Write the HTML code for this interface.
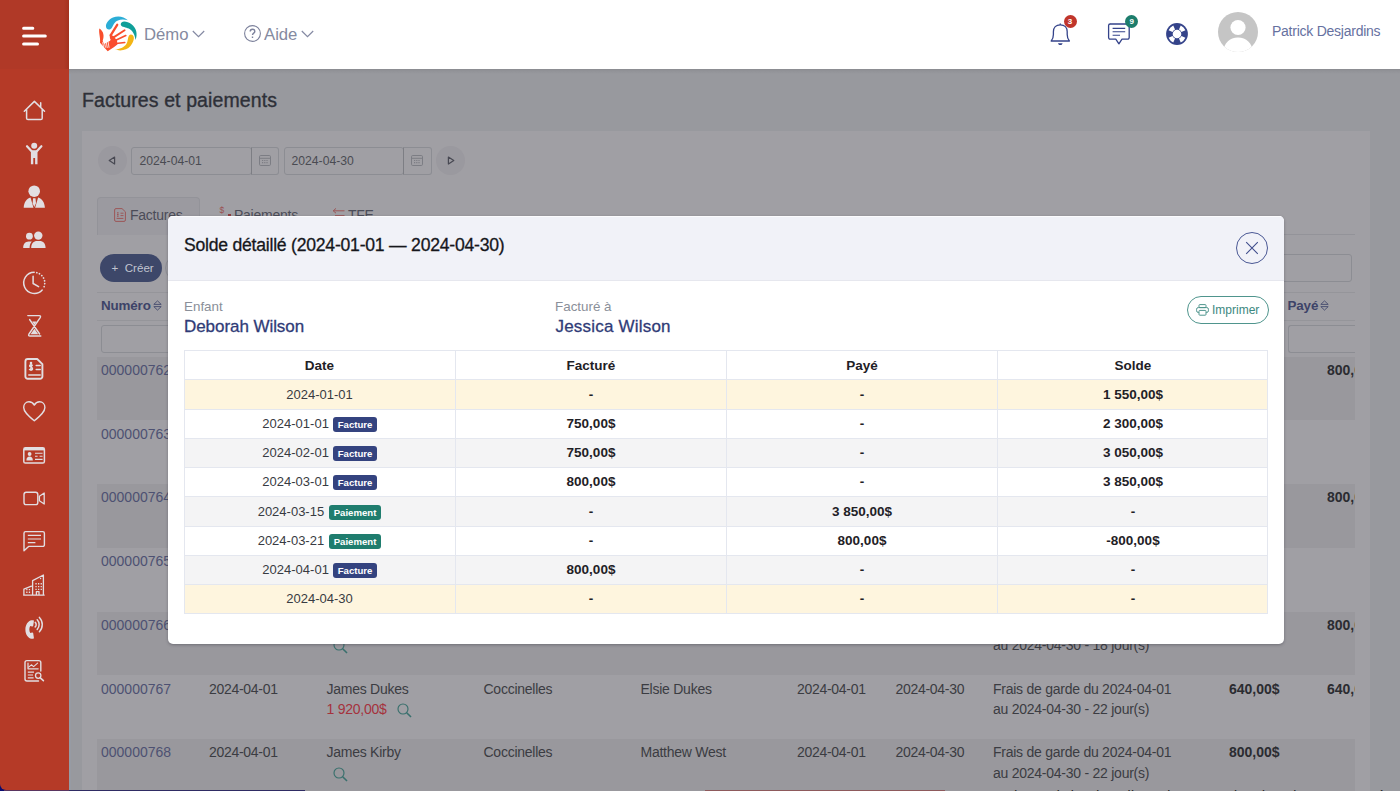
<!DOCTYPE html>
<html lang="fr"><head><meta charset="utf-8"><title>Factures et paiements</title>
<style>

*{box-sizing:border-box;margin:0;padding:0}
html,body{width:1400px;height:791px;overflow:hidden}
body{font-family:"Liberation Sans",sans-serif;background:#98999e;position:relative;color:#3a3b40}
.abs{position:absolute}
svg{display:block;position:absolute;overflow:visible}
/* sidebar */
#side{left:0;top:0;width:69px;height:791px;background:#b53a27}
#sidetop{left:0;top:0;width:69px;height:69px;background:linear-gradient(90deg,#b03927 0,#b03927 64px,#a4321f 69px)}
/* header */
#head{left:69px;top:0;width:1331px;height:69px;background:#fff}
#headline{left:69px;top:69px;width:1331px;height:5px;background:linear-gradient(#8a8b90,#919297 35%,#98999e)}
.htxt{font-size:16.700px;color:#858aa0;white-space:nowrap;line-height:20px}
#user{left:1272px;top:21px;font-size:14px;letter-spacing:-.25px;color:#66719f;white-space:nowrap;line-height:20px}
.badge{border-radius:50%;width:13px;height:13px;color:#fff;font-size:8px;font-weight:bold;text-align:center;line-height:13px}
/* dimmed page */
#ptitle{left:82px;top:88px;letter-spacing:.1px;font-size:19.5px;color:#2e3038;white-space:nowrap;line-height:24px;-webkit-text-stroke:.35px #2e3038}
#card{left:82px;top:131px;width:1288px;height:670px;background:#a09fa4}
.inp{border:1px solid #8c8d93;border-radius:3px;height:28px}
.dtxt{font-size:12.2px;color:#4a4b52;white-space:nowrap;line-height:16px}
.rowd{left:97px;width:1258px;background:#99989d}
.bt{font-size:14px;color:#3b3c42;white-space:nowrap;line-height:18px;letter-spacing:-.25px}
.lnk{color:#4d5172;letter-spacing:0}
.bb{font-weight:bold;color:#2b2c31;letter-spacing:0}
.hl{left:97px;width:1258px;height:1px;background:#95959a}
.th{font-size:13.400px;letter-spacing:-.15px;font-weight:bold;color:#3d4368;white-space:nowrap;line-height:18px}
.tabt{font-size:14px;color:#4b4c58;white-space:nowrap;line-height:18px;letter-spacing:-.25px}
.dt{letter-spacing:-.3px}
/* modal */
#modal{left:168px;top:216px;width:1116px;height:428px;background:#fff;border-radius:5px;overflow:hidden;box-shadow:0 1px 3px rgba(60,60,70,.45)}
#mhead{left:0;top:0;width:1116px;height:64px;background:#f1f2f8;border-top:1px solid #fbfbfd}
#mline{left:0;top:64px;width:1116px;height:1px;background:#e6e7ee}
#mtitle{left:16px;top:16.5px;font-size:17.6px;letter-spacing:-.230px;color:#16171c;white-space:nowrap;line-height:24px;-webkit-text-stroke:.3px #16171c}
.lab{font-size:13.400px;color:#8a8f99;white-space:nowrap;line-height:16px;margin-top:.600px}
.nam{margin-top:.800px;letter-spacing:-.060px;font-size:17px;color:#303c78;white-space:nowrap;line-height:22px;-webkit-text-stroke:.3px #2e3a75}
#print{left:1019px;top:80px;width:82px;height:28px;border:1px solid #4f958d;border-radius:14px}
#print span{position:absolute;left:24px;top:6px;font-size:12px;color:#3c8880;line-height:14px;white-space:nowrap}
#tbl{left:16px;top:134.250px;width:1084px;height:263.550px;border:1px solid #e4e7ef}
.tr{position:absolute;left:0;width:1082px;height:29.200px;border-top:1px solid #e4e7ef}
.tr.y{background:#fef5de}.tr.g{background:#f4f4f5}
.td{position:absolute;top:0;height:28.200px;width:271px;text-align:center;font-size:13px;line-height:29.300px;color:#383b42;white-space:nowrap;border-left:1px solid #e4e7ef}
.td.b{font-weight:bold;color:#1f2126;font-size:13.5px}
.c0{left:-1px;border-left:none}.c1{left:270px}.c2{left:541px}.c3{left:812px}
.tag{display:inline-block;vertical-align:middle;position:relative;top:-.100px;height:15.500px;line-height:15.5px;border-radius:3px;color:#fff;font-weight:bold;font-size:9.6px;margin-left:4.6px;padding:0;text-align:center}
.tag.f{background:#34437f;width:43.2px}.tag.p{background:#1f7d6e;width:52.6px}

</style></head><body>
<div id="ptitle" class="abs">Factures et paiements</div>
<div id="card" class="abs"></div>
<div class="abs" style="left:69px;top:74px;width:2px;height:717px;background:#969ba4"></div>
<div class="abs" style="left:97.5px;top:145.5px;width:29px;height:29px;border-radius:50%;background:#9a999f"></div>
<svg style="left:108px;top:155.5px" width="8" height="9" viewBox="0 0 8 9"><path d="M6.6 1 L1.2 4.5 L6.6 8 Z" fill="none" stroke="#484953" stroke-width="1.200" stroke-linejoin="round"/></svg>
<div class="abs inp" style="left:131px;top:146.5px;width:120.5px"></div>
<div class="abs inp" style="left:250.5px;top:146.5px;width:28.5px;border-left-color:#7d7e84;border-radius:0 3px 3px 0"></div>
<div class="abs dtxt" style="left:139.5px;top:152.5px">2024-04-01</div>
<svg style="left:258.5px;top:153.5px" width="12" height="12" viewBox="0 0 12 12" fill="none" stroke="#7c7d84" stroke-width="1"><rect x="0.5" y="1.5" width="11" height="10" rx="1.2"/><path d="M0.5 4.3 H11.5" /><path d="M3 6.5h6M3 8.6h6" stroke-dasharray="1 .8" stroke-width="1.1"/></svg>
<div class="abs inp" style="left:283.5px;top:146.5px;width:120px"></div>
<div class="abs inp" style="left:402.5px;top:146.5px;width:29px;border-left-color:#7d7e84;border-radius:0 3px 3px 0"></div>
<div class="abs dtxt" style="left:291.5px;top:152.5px">2024-04-30</div>
<svg style="left:410.5px;top:153.5px" width="12" height="12" viewBox="0 0 12 12" fill="none" stroke="#7c7d84" stroke-width="1"><rect x="0.5" y="1.5" width="11" height="10" rx="1.2"/><path d="M0.5 4.3 H11.5" /><path d="M3 6.5h6M3 8.6h6" stroke-dasharray="1 .8" stroke-width="1.1"/></svg>
<div class="abs" style="left:435.5px;top:145.5px;width:29px;height:29px;border-radius:50%;background:#9a999f"></div>
<svg style="left:446.5px;top:155.5px" width="8" height="9" viewBox="0 0 8 9"><path d="M1.4 1 L6.8 4.5 L1.4 8 Z" fill="none" stroke="#484953" stroke-width="1.200" stroke-linejoin="round"/></svg>
<div class="abs" style="left:97px;top:197px;width:103px;height:38px;background:#9b9aa0;border:1px solid #939399;border-bottom:none;border-radius:4px 4px 0 0"></div>
<div class="abs hl" style="top:234px;left:199px;width:1156px;background:#939399"></div>
<svg style="left:114px;top:208px" width="12" height="14" viewBox="0 0 12 14" fill="none" stroke="#9c5758" stroke-width="1"><path d="M2 .6h6l3.4 3.2v8.2a1.4 1.4 0 0 1-1.4 1.4h-8a1.4 1.4 0 0 1-1.4-1.4v-10a1.4 1.4 0 0 1 1.4-1.4z"/><path d="M6.5 5.2h3M6.5 7.6h3M2.6 10.4h6.8" /><path d="M3.8 4.2v4.6" stroke-width="1.6" stroke-dasharray="1.2 .6"/></svg>
<div class="abs tabt" style="left:130px;top:206px">Factures</div>
<div class="abs" style="left:219.5px;top:205px;font-size:8.5px;color:#9a5152;line-height:10px">$</div><div class="abs" style="left:227.5px;top:214.4px;width:3.6px;height:1.8px;background:#8f3b3d"></div>
<div class="abs tabt" style="left:234px;top:206px">Paiements</div>
<svg style="left:332px;top:208px" width="13" height="10" viewBox="0 0 13 10" fill="none" stroke="#9c5758" stroke-width="1"><path d="M12.5 2.8H1.2M4 .4 1.2 2.8 4 5.2M3 7.6h9.5"/></svg>
<div class="abs tabt" style="left:348px;top:206px">TFE</div>
<div class="abs" style="left:100px;top:254px;width:61.5px;height:27.5px;border-radius:14px;background:#3d4769"></div>
<div class="abs" style="left:111.500px;top:260.500px;font-size:11.600px;color:#c0c4d0;line-height:14px;white-space:nowrap">+&nbsp; Créer</div>
<div class="abs" style="left:165px;top:254px;width:80px;height:27.5px;border-radius:14px;border:1px solid #8e8f95"></div>
<div class="abs inp" style="left:1170px;top:254px;width:181.5px;height:27.5px"></div>
<div class="abs hl" style="top:292px"></div><div class="abs hl" style="top:320px"></div>
<div class="abs th" style="left:101px;top:297px">Numéro</div>
<svg style="left:152.5px;top:300px" width="9" height="11" viewBox="0 0 9 11" fill="none" stroke="#4d5273" stroke-width="1"><path d="M.8 4.4 4.5 .9l3.7 3.5zM.8 6.6l3.7 3.5 3.7-3.5z" stroke-linejoin="round"/></svg>
<div class="abs th" style="left:1287.5px;top:297px">Payé</div>
<svg style="left:1320px;top:300px" width="9" height="11" viewBox="0 0 9 11" fill="none" stroke="#4d5273" stroke-width="1"><path d="M.8 4.4 4.5 .9l3.7 3.5zM.8 6.6l3.7 3.5 3.7-3.5z" stroke-linejoin="round"/></svg>
<div class="abs inp" style="left:101px;top:324.5px;width:110px;height:28.5px"></div>
<div class="abs" style="left:1287.5px;top:324.5px;width:67.5px;height:28.5px;border:1px solid #8c8d93;border-right:none;border-radius:3px 0 0 3px"></div>
<div class="abs rowd" style="top:356.8px;height:63.7px"></div>
<div class="abs bt lnk" style="left:101px;top:361.0px">000000762</div>
<div class="abs bt bb" style="left:1327px;top:361.0px;width:28px;overflow:hidden">800,00$</div>
<div class="abs bt lnk" style="left:101px;top:424.7px">000000763</div>
<div class="abs rowd" style="top:484.2px;height:63.7px"></div>
<div class="abs bt lnk" style="left:101px;top:488.4px">000000764</div>
<div class="abs bt bb" style="left:1327px;top:488.4px;width:28px;overflow:hidden">800,00$</div>
<div class="abs bt lnk" style="left:101px;top:552.1px">000000765</div>
<div class="abs rowd" style="top:611.6px;height:63.7px"></div>
<div class="abs bt lnk" style="left:101px;top:615.8px">000000766</div>
<div class="abs bt bb" style="left:1327px;top:615.8px;width:28px;overflow:hidden">800,00$</div>
<div class="abs bt lnk" style="left:101px;top:679.5px">000000767</div>
<div class="abs bt bb" style="left:1327px;top:679.5px;width:28px;overflow:hidden">640,00$</div>
<div class="abs bt dt" style="left:209px;top:679.5px">2024-04-01</div>
<div class="abs bt" style="left:326.5px;top:679.5px">James Dukes</div>
<div class="abs bt" style="left:326.5px;top:700.1px;color:#a5323d">1 920,00$</div>
<svg style="left:397px;top:702.8px" width="15" height="15" viewBox="0 0 15 15" fill="none" stroke="#39706d" stroke-width="1.150"><circle cx="6" cy="6" r="5"/><path d="M9.7 9.7 14 14" stroke-width="1.6"/></svg>
<div class="abs bt" style="left:483.5px;top:679.5px">Coccinelles</div>
<div class="abs bt" style="left:640.5px;top:679.5px">Elsie Dukes</div>
<div class="abs bt dt" style="left:797px;top:679.5px">2024-04-01</div>
<div class="abs bt dt" style="left:895.5px;top:679.5px">2024-04-30</div>
<div class="abs bt" style="left:993px;top:679.5px">Frais de garde du 2024-04-01</div>
<div class="abs bt" style="left:993px;top:700.1px">au 2024-04-30 - 22 jour(s)</div>
<div class="abs bt bb" style="left:1229px;top:679.5px">640,00$</div>
<div class="abs rowd" style="top:739.0px;height:63.7px"></div>
<div class="abs bt lnk" style="left:101px;top:743.2px">000000768</div>
<div class="abs bt dt" style="left:209px;top:743.2px">2024-04-01</div>
<div class="abs bt" style="left:326.5px;top:743.2px">James Kirby</div>
<svg style="left:333px;top:766.5px" width="15" height="15" viewBox="0 0 15 15" fill="none" stroke="#39706d" stroke-width="1.150"><circle cx="6" cy="6" r="5"/><path d="M9.7 9.7 14 14" stroke-width="1.6"/></svg>
<div class="abs bt" style="left:483.5px;top:743.2px">Coccinelles</div>
<div class="abs bt" style="left:640.5px;top:743.2px">Matthew West</div>
<div class="abs bt dt" style="left:797px;top:743.2px">2024-04-01</div>
<div class="abs bt dt" style="left:895.5px;top:743.2px">2024-04-30</div>
<div class="abs bt" style="left:993px;top:743.2px">Frais de garde du 2024-04-01</div>
<div class="abs bt" style="left:993px;top:763.8px">au 2024-04-30 - 22 jour(s)</div>
<div class="abs bt bb" style="left:1229px;top:743.2px">800,00$</div>
<svg style="left:333px;top:639.1px" width="15" height="15" viewBox="0 0 15 15" fill="none" stroke="#39706d" stroke-width="1.150"><circle cx="6" cy="6" r="5"/><path d="M9.7 9.7 14 14" stroke-width="1.6"/></svg>
<div class="abs bt" style="left:993px;top:636.4px">au 2024-04-30 - 18 jour(s)</div>
<div class="abs" style="left:1355px;top:131px;width:15px;height:660px;background:#a09fa4"></div>
<div class="abs" style="left:69px;top:789.600px;width:236px;height:2px;background:#2f2c64"></div>
<div class="abs" style="left:705px;top:789.6px;width:240px;height:2px;background:#8e5a5c"></div>
<div class="abs" style="left:975px;top:788.700px;width:425px;height:8px;font-size:14px;line-height:14px;color:#222;white-space:nowrap;overflow:hidden;letter-spacing:.2px">vous devez d&#39;abord appliquer la transaction de paiement. Le mécanisme</div>
<div class="abs" style="left:0;top:780px;width:12px;height:11px;background:#0b0b70"></div><div id="side" class="abs" style="height:789.600px;border-radius:0 0 0 6px"></div><div class="abs" style="left:4px;top:789.600px;width:65px;height:2px;background:#5a3560"></div><div id="sidetop" class="abs"></div>
<svg style="left:0;top:0" width="69" height="791" viewBox="0 0 69 791" fill="none" stroke="#e2dee2" stroke-width="1.5" stroke-linecap="round" stroke-linejoin="round">
<g stroke="#fff" stroke-width="3"><path d="M23.6 28.2H32.8M23.6 36H45.3M23.6 43.9H37.5"/></g>
<path d="M24.3 111.2 34.4 101.4 44.5 111.2M26.6 109.4V118.2a1.4 1.4 0 0 0 1.4 1.4H40.8a1.4 1.4 0 0 0 1.4-1.4V109.4M40.7 102.8v4"/>
<g fill="#e2dee2" stroke="none"><circle cx="34.2" cy="145.7" r="3"/><path d="M30.9 150.2h6.6v14h-2.4v-6.2h-1.8v6.2h-2.4z"/></g><path d="M27 146.2 31.6 151.2M41.4 146.2 36.8 151.2" stroke-width="2.2"/>
<g fill="#e2dee2" stroke="none"><circle cx="34.2" cy="191.2" r="5.8"/><path d="M23.7 207.8c.3-5.6 3-9 6.800-10.2l3 10.200zM44.9 207.8c-.3-5.600-3-9-6.800-10.2l-3 10.200zM33.1 198.2h2.400l.5 5-1.700 3.800-1.700-3.800z"/></g>
<g fill="#e2dee2" stroke="none"><circle cx="29.4" cy="236.2" r="3.4"/><circle cx="38.3" cy="235.600" r="4.2"/><path d="M23.200 248c0-4 2-6.400 5.400-6.500h3.200c-1.400 1.400-2.200 3.600-2.200 6.500zM31.200 248c0-4.600 2.400-7 6-7h2.400c3.600 0 6 2.400 6 7z"/></g>
<path d="M34.2 272.300A10.600 10.600 0 1 0 42.200 290"/><path d="M36.800 272.700A10.600 10.600 0 0 1 42.900 289" stroke-dasharray="0.1 2.800" stroke-width="1.7"/><path d="M33.100 276.300V283.500L38.600 286.600"/>
<path d="M27.800 315.600H39.200Q41.200 315.600 40.200 317.600L29 334Q27.800 336 30 336H40.800M39.600 334 29.600 319.500" stroke-width="1.400"/><path d="M32.200 321.400h4.400l-2.200 3.400zM30.600 334.200l3.800-5.400 3.800 5.400z" fill="#e2dee2" stroke="none"/>
<path d="M27.800 359h9.400l5.200 5.200v12.200a2.400 2.400 0 0 1-2.400 2.400H27.800a2.400 2.400 0 0 1-2.400-2.400V361.400a2.400 2.400 0 0 1 2.400-2.400z" stroke-width="1.9"/><path d="M36.200 365.600h4M36.200 369.500h4M28.800 375h11.400" stroke-width="1.500"/><path d="M31 363v9.200" stroke-width="2.600" stroke-dasharray="0.100 3" /><path d="M32.400 365.200c-1.500-1.200-3.400-.2-2.600 1.200.6 1 3 .8 2.800 2.600-.2 1.400-2.200 1.600-3.200.4" stroke-width="1.300"/>
<path d="M34.300 420.800C28 415.600 23.700 411.800 23.700 407.400c0-3.200 2.300-5.600 5.300-5.600 2.200 0 4.200 1.300 5.300 3.300 1.100-2 3.100-3.300 5.300-3.300 3 0 5.300 2.400 5.300 5.600 0 4.400-4.300 8.200-10.600 13.400z" stroke-width="1.400"/>
<rect x="23.800" y="447.800" width="20.600" height="15.300" rx="1.600" stroke-width="1.500"/><path d="M24 449.200H44.200" stroke-width="2.400" stroke-linecap="butt"/><g fill="#e2dee2" stroke="none"><circle cx="29.600" cy="454" r="1.900"/><path d="M26.400 460.400c0-2.600 1.400-3.800 3.200-3.800s3.200 1.200 3.200 3.800z"/></g><path d="M35 453.200h7.600M35 456.300h2.600M39.600 456.300h3M35 459.400h7.600" stroke-width="1.100" stroke-linecap="butt"/>
<rect x="24" y="492.300" width="13.800" height="12.300" rx="2.200" stroke-width="1.400"/><path d="M39.400 496.200 44.200 493V504L39.400 500.800z" stroke-width="1.300"/>
<path d="M25.600 531.600H42.800a1.600 1.600 0 0 1 1.600 1.600V544.800a1.600 1.600 0 0 1-1.600 1.600H28.600L24 550.800V533.200a1.600 1.600 0 0 1 1.600-1.600z" stroke-width="1.400"/><path d="M27.800 535.400H41M27.800 539H41M27.800 542.600H35.400" stroke-width="1.200" stroke-linecap="butt"/>
<path d="M32.600 594.800V580.600L43.400 575V594.800M23.900 594.800V589.200L31.400 586.200M23.600 595.100H44.200M36.400 595V591.600h2.600V595" stroke-width="1.300"/><path d="M35.400 583.800h6.800M35.400 586.600h6.800M35.400 589.400h6.800M26.200 589.600h4M26.200 592.200h4" stroke-width="1.400" stroke-dasharray="1.300 1.300" stroke-linecap="butt"/><path d="M40.600 578.500v.1" stroke-width="1.400"/>
<path d="M31.600 620.300c-3.600.6-6.200 4.400-6.200 9.400 0 4.600 2.600 8.400 6 9h1.800c.5 0 .8-.4.700-.9l-.7-4.500c-.1-.5-.5-.8-1-.7l-1.900.4c-1.200-1.600-1.400-5.200-.1-7l2 .400c.5.1.9-.2 1-.7l.700-4.500c.1-.5-.2-.9-.7-.9z" fill="#e2dee2" stroke="none"/><path d="M35.200 622.400c1.300 1.200 1.300 3.300 0 4.500M37.200 619.800c2.600 2.600 2.600 7 0 9.600M39.400 617.400c3.800 3.900 3.800 10.500 0 14.400" stroke-width="1.500"/>
<path d="M38.500 681H27a2 2 0 0 1-2-2V662.600a2 2 0 0 1 2-2H38.800a2 2 0 0 1 2 2V671" stroke-width="1.400"/><path d="M28 663.200V668.800H38.200" stroke-width="1.200"/><path d="M28.600 667.200 31.400 664.800 33.600 666.600 37.600 663.200" stroke-width="1.100"/><path d="M27.800 672.200H34M27.800 675H33M27.800 677.800H33.600" stroke-width="1.200" stroke-linecap="butt"/><circle cx="38.200" cy="675.600" r="2.700" stroke-width="1.300"/><path d="M40.300 677.800 43.400 680.700" stroke-width="1.600"/>
</svg>
<div id="head" class="abs"></div><div id="headline" class="abs"></div>
<svg style="left:96px;top:14px" width="44" height="40" viewBox="96 14 44 40">
<path d="M127.900 20.300C124 16.500 118 15.500 113 17.500C108.500 19.500 105.500 23.500 106 26.800C106.300 29.300 108.500 30.200 110.300 29.200C112.300 28 112.600 25.600 114.400 23.200C117 19.800 122 18.600 127.900 20.300Z" fill="#2badd6"/>
<path d="M135.600 40.100C137.800 34 136.500 28 131.500 24.300C128 21.600 123.500 20.600 121.600 22.400C120 23.900 120.800 26 123 26.800C126 27.900 129.500 28 132 31C134 33.400 135 36.500 135.600 40.100Z" fill="#0f9f99"/>
<path d="M114.900 49.600C121 51.500 127 50 130.500 46C133 43 134.500 39 133.600 36.600C132.800 34.300 130.200 33.800 128.900 35.800C127.600 38 128.200 41 126.400 44C124 47.600 119.500 49.200 114.900 49.600Z" fill="#f3b515"/>
<g stroke="#f94e2c" stroke-linecap="round" fill="none"><path d="M110.800 35.200 117.200 24.800" stroke-width="2.300"/><path d="M113.600 37.400 124.600 30.200" stroke-width="1.900"/><path d="M115.200 40.400 125.800 35.500" stroke-width="1.600"/><path d="M116 43.600 124.800 42.600" stroke-width="1.500"/></g>
<path d="M109.600 34.600 113.400 36 117 40.600 117.400 44.400 113.800 47.200 107.700 51.300 100 42.800C100.700 37.400 98.500 33.200 99.300 28.400 103.800 31 104.400 36.200 102.700 40.600L104 44 110.200 40.800Z" fill="#f94e2c"/>
<g stroke="#fff" stroke-width=".9" stroke-linecap="round" opacity=".9"><path d="M102.700 42.600 103.500 46.400M104.500 42.400 105.400 47.200M106.300 42.200 107.200 47.600M108.100 41.800 109 47.400"/><path d="M103.600 41.600 109.800 39.400" stroke-width="1.600"/></g>
</svg>
<div class="abs htxt" style="left:144px;top:24.500px">Démo</div>
<svg style="left:192px;top:30px" width="13" height="8" viewBox="0 0 13 8" fill="none" stroke="#8489a2" stroke-width="1.200"><path d="M.8 1 6.500 6.600 12.200 1"/></svg>
<svg style="left:244px;top:25px" width="17" height="17" viewBox="0 0 17 17" fill="none" stroke="#7d829c" stroke-width="1.100"><circle cx="8.500" cy="8.500" r="7.900"/><path d="M6.200 6.600c0-1.400 1-2.300 2.300-2.300s2.300.9 2.300 2.100c0 1.800-2.300 1.700-2.300 3.600M8.500 11.600v1.500" stroke-width="1.400"/></svg>
<div class="abs htxt" style="left:264px;top:24.500px">Aide</div>
<svg style="left:300.5px;top:30px" width="13" height="8" viewBox="0 0 13 8" fill="none" stroke="#8489a2" stroke-width="1.200"><path d="M.8 1 6.500 6.600 12.200 1"/></svg>
<svg style="left:1049px;top:20px" width="24" height="28" viewBox="1049 20 24 28" fill="none" stroke="#34438a" stroke-width="1.300" stroke-linejoin="round"><path d="M1051.200 41h18.200c-1.400-1.400-2.200-3.200-2.200-6.400v-2.800c0-4-2.600-7-6.900-7s-6.900 3-6.900 7v2.800c0 3.200-.8 5-2.200 6.400z"/><path d="M1060.300 24.800v-1.200"/><path d="M1058 43.200c.3 1.200 1.200 1.900 2.300 1.900s2-.7 2.300-1.900z" fill="#34438a" stroke="none"/></svg>
<div class="abs badge" style="left:1063.500px;top:15px;background:#c0352b">3</div>
<svg style="left:1106px;top:20px" width="26" height="28" viewBox="1106 20 26 28" fill="none" stroke="#34438a" stroke-width="1.300" stroke-linejoin="round"><path d="M1110.200 24h17.400a1.600 1.600 0 0 1 1.600 1.600v12a1.600 1.600 0 0 1-1.600 1.600h-5.600l-3.100 4.600-3.100-4.600h-5.600a1.600 1.600 0 0 1-1.600-1.600v-12a1.600 1.600 0 0 1 1.600-1.600z"/><path d="M1112.600 28.400h12.600M1112.600 31.800h12.600M1112.600 35.200h7.400" stroke-width="1.100"/></svg>
<div class="abs badge" style="left:1125.300px;top:15px;background:#1d7d6c">9</div>
<svg style="left:1165px;top:22px" width="24" height="24" viewBox="-12 -12 24 24"><circle r="10.900" fill="#34438a"/><g fill="#fff"><path d="M-3.30 -8.59A9.2 9.2 0 0 1 3.30 -8.59L1.76 -4.57A4.9 4.9 0 0 0 -1.76 -4.57Z" transform="rotate(45)"/><path d="M-3.30 -8.59A9.2 9.2 0 0 1 3.30 -8.59L1.76 -4.57A4.9 4.9 0 0 0 -1.76 -4.57Z" transform="rotate(135)"/><path d="M-3.30 -8.59A9.2 9.2 0 0 1 3.30 -8.59L1.76 -4.57A4.9 4.9 0 0 0 -1.76 -4.57Z" transform="rotate(225)"/><path d="M-3.30 -8.59A9.2 9.2 0 0 1 3.30 -8.59L1.76 -4.57A4.9 4.9 0 0 0 -1.76 -4.57Z" transform="rotate(315)"/><circle r="4.300"/></g></svg>
<svg style="left:1218px;top:12px" width="40" height="40" viewBox="0 0 40 40"><defs><clipPath id="av"><circle cx="20" cy="20" r="20"/></clipPath></defs><circle cx="20" cy="20" r="20" fill="#c5c5c5"/><g clip-path="url(#av)" fill="#fff"><circle cx="20" cy="15.500" r="7.600"/><path d="M5 42c0-10 6-16.500 15-16.500s15 6.500 15 16.500z"/></g></svg>
<div id="user" class="abs">Patrick Desjardins</div>
<div id="modal" class="abs">
<div id="mhead" class="abs"></div><div id="mline" class="abs"></div>
<div id="mtitle" class="abs">Solde détaillé (2024-01-01 — 2024-04-30)</div>
<svg style="left:1068px;top:16px" width="32" height="32" viewBox="0 0 32 32"><circle cx="16" cy="16" r="15.5" fill="none" stroke="#4a5894" stroke-width="1"/><path d="M10.2 10.2 L21.8 21.8 M21.8 10.2 L10.2 21.8" stroke="#3f4d8c" stroke-width="1.1" fill="none"/></svg>
<div class="abs lab" style="left:16px;top:82px">Enfant</div>
<div class="abs nam" style="left:16px;top:99px">Deborah Wilson</div>
<div class="abs lab" style="left:387px;top:82px">Facturé à</div>
<div class="abs nam" style="left:387.500px;top:99px;letter-spacing:.2px">Jessica Wilson</div>
<div id="print" class="abs"><svg style="left:8px;top:7px" width="13" height="12" viewBox="0 0 13 12" fill="none" stroke="#4f958d" stroke-width="1"><rect x="3" y="0.6" width="7" height="3" rx="0.8"/><rect x="0.6" y="3.6" width="11.8" height="4.8" rx="1.6"/><rect x="3" y="6.4" width="7" height="4.8" rx="0.8" fill="#fff"/></svg><span>Imprimer</span></div>
<div id="tbl" class="abs">
<div class="tr" style="top:0;border-top:none;height:27.55px"><div class="td b c0" style="height:27.55px;line-height:29.35px">Date</div><div class="td b c1" style="height:27.55px;line-height:29.35px">Facturé</div><div class="td b c2" style="height:27.55px;line-height:29.35px">Payé</div><div class="td b c3" style="height:27.55px;line-height:29.35px">Solde</div></div>
<div class="tr y" style="top:27.55px;height:30.10px"><div class="td c0" style="height:29.10px;line-height:29.80px">2024-01-01</div><div class="td b c1" style="height:29.10px;line-height:29.80px">-</div><div class="td b c2" style="height:29.10px;line-height:29.80px">-</div><div class="td b c3" style="height:29.10px;line-height:29.80px">1 550,00$</div></div>
<div class="tr " style="top:57.65px;height:29.05px"><div class="td c0" style="height:28.05px;line-height:28.75px">2024-01-01<span class="tag f">Facture</span></div><div class="td b c1" style="height:28.05px;line-height:28.75px">750,00$</div><div class="td b c2" style="height:28.05px;line-height:28.75px">-</div><div class="td b c3" style="height:28.05px;line-height:28.75px">2 300,00$</div></div>
<div class="tr g" style="top:86.70px;height:28.95px"><div class="td c0" style="height:27.95px;line-height:28.65px">2024-02-01<span class="tag f">Facture</span></div><div class="td b c1" style="height:27.95px;line-height:28.65px">750,00$</div><div class="td b c2" style="height:27.95px;line-height:28.65px">-</div><div class="td b c3" style="height:27.95px;line-height:28.65px">3 050,00$</div></div>
<div class="tr " style="top:115.65px;height:29.00px"><div class="td c0" style="height:28.00px;line-height:28.70px">2024-03-01<span class="tag f">Facture</span></div><div class="td b c1" style="height:28.00px;line-height:28.70px">800,00$</div><div class="td b c2" style="height:28.00px;line-height:28.70px">-</div><div class="td b c3" style="height:28.00px;line-height:28.70px">3 850,00$</div></div>
<div class="tr g" style="top:144.65px;height:29.90px"><div class="td c0" style="height:28.90px;line-height:29.60px">2024-03-15<span class="tag p">Paiement</span></div><div class="td b c1" style="height:28.90px;line-height:29.60px">-</div><div class="td b c2" style="height:28.90px;line-height:29.60px">3 850,00$</div><div class="td b c3" style="height:28.90px;line-height:29.60px">-</div></div>
<div class="tr " style="top:174.55px;height:29.10px"><div class="td c0" style="height:28.10px;line-height:28.80px">2024-03-21<span class="tag p">Paiement</span></div><div class="td b c1" style="height:28.10px;line-height:28.80px">-</div><div class="td b c2" style="height:28.10px;line-height:28.80px">800,00$</div><div class="td b c3" style="height:28.10px;line-height:28.80px">-800,00$</div></div>
<div class="tr g" style="top:203.65px;height:28.90px"><div class="td c0" style="height:27.90px;line-height:28.60px">2024-04-01<span class="tag f">Facture</span></div><div class="td b c1" style="height:27.90px;line-height:28.60px">800,00$</div><div class="td b c2" style="height:27.90px;line-height:28.60px">-</div><div class="td b c3" style="height:27.90px;line-height:28.60px">-</div></div>
<div class="tr y" style="top:232.55px;height:29.00px"><div class="td c0" style="height:28.00px;line-height:28.70px">2024-04-30</div><div class="td b c1" style="height:28.00px;line-height:28.70px">-</div><div class="td b c2" style="height:28.00px;line-height:28.70px">-</div><div class="td b c3" style="height:28.00px;line-height:28.70px">-</div></div>
</div>
</div>
</body></html>
